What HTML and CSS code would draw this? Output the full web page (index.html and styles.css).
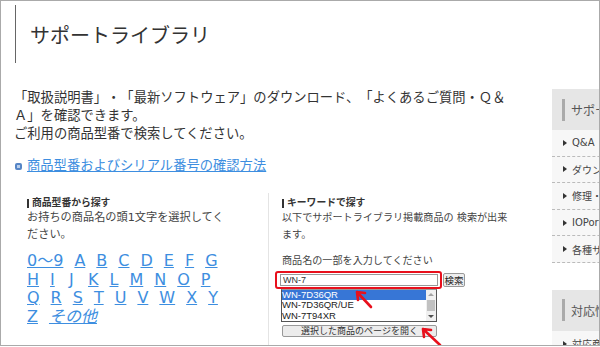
FILE: index.html
```html
<!DOCTYPE html>
<html lang="ja">
<head>
  <meta charset="UTF-8">
  <meta name="viewport" content="width=device-width, initial-scale=1.0">
  <title>サポートライブラリ</title>
  <link rel="stylesheet" href="styles.css">
</head>
<body>
<div class="frame">
  <h1 class="page-title">サポートライブラリ</h1>

  <div class="content">
    <div class="main">
      <p class="intro">「取扱説明書」・「最新ソフトウェア」のダウンロード、「よくあるご質問・Ｑ＆Ａ」を確認できます。<br>ご利用の商品型番で検索してください。</p>

      <p class="guide"><span class="guide-icon"></span><a href="#">商品型番およびシリアル番号の確認方法</a></p>

      <div class="search-cols">
        <!-- search by first letter -->
        <section class="col col-model">
          <h2 class="col-title">商品型番から探す</h2>
          <p class="col-text">お持ちの商品名の頭1文字を選択してください。</p>
          <div class="alpha">
            <div class="alpha-row">
              <a href="#">0～9</a><a href="#">A</a><a href="#">B</a><a href="#">C</a><a href="#">D</a><a href="#">E</a><a href="#">F</a><a href="#">G</a>
            </div>
            <div class="alpha-row">
              <a href="#">H</a><a href="#">I</a><a href="#">J</a><a href="#">K</a><a href="#">L</a><a href="#">M</a><a href="#">N</a><a href="#">O</a><a href="#">P</a>
            </div>
            <div class="alpha-row">
              <a href="#">Q</a><a href="#">R</a><a href="#">S</a><a href="#">T</a><a href="#">U</a><a href="#">V</a><a href="#">W</a><a href="#">X</a><a href="#">Y</a>
            </div>
            <div class="alpha-row">
              <a href="#">Z</a><a href="#" class="alpha-other">その他</a>
            </div>
          </div>
        </section>

        <!-- search by keyword -->
        <section class="col col-keyword">
          <h2 class="col-title">キーワードで探す</h2>
          <p class="col-text">以下でサポートライブラリ掲載商品の 検索が出来ます。</p>
          <p class="col-label">商品名の一部を入力してください</p>

          <div class="kw-form">
            <div class="kw-row">
              <input type="text" class="kw-input" value="WN-7">
              <button class="kw-search">検索</button>
            </div>
            <div class="kw-list">
              <ul class="kw-items">
                <li class="selected">WN-7D36QR</li>
                <li>WN-7D36QR/UE</li>
                <li>WN-7T94XR</li>
              </ul>
              <div class="kw-scroll">
                <span class="kw-up"></span>
                <span class="kw-thumb"></span>
                <span class="kw-down"></span>
              </div>
            </div>
            <button class="kw-open">選択した商品のページを開く</button>

            <span class="mark-box"></span>
            <svg class="mark-arrows" width="170" height="80" viewBox="0 0 170 80">
              <path d="M91 34 L77 19 M85 20 L77 19 L78 27" />
              <path d="M160 72 L143 56 M151 57 L143 56 L144 64" />
            </svg>
          </div>
        </section>
      </div>
    </div>

    <aside class="side">
      <div class="side-block">
        <div class="side-head">サポート情報</div>
        <ul class="side-list">
          <li>Q&amp;A</li>
          <li>ダウンロード</li>
          <li>修理・お問い合わせ</li>
          <li>IOPortal</li>
          <li>各種サービス</li>
        </ul>
      </div>
      <div class="side-block">
        <div class="side-head">対応情報</div>
        <ul class="side-list">
          <li>対応商品検索</li>
        </ul>
      </div>
    </aside>
  </div>
</div>
</body>
</html>
```

FILE: styles.css
```css
* {
  box-sizing: border-box;
}

body {
  margin: 0;
  background: #fff;
  color: #333;
  font-family: "DejaVu Sans", "Noto Sans CJK JP", sans-serif;
  text-spacing-trim: space-all;
}

/* outer window frame */
.frame {
  width: 600px;
  height: 346px;
  border: 1px solid #aaa;
  overflow: hidden;
}

.page-title {
  display: flex;
  align-items: center;
  height: 58px;
  margin: 4px 0 0 14px;
  padding-left: 14px;
  border-left: 1px solid #666;
  font-size: 20px;
  font-weight: normal;
  color: #333;
}

.content {
  display: flex;
  align-items: flex-start;
  margin-top: 26px;
}

.main {
  flex-shrink: 0;
  width: 500px;
  margin-left: 13px;
}

.intro {
  margin: 0;
  font-size: 13.3px;
  line-height: 18px;
}

.guide {
  display: flex;
  align-items: center;
  margin: 14px 0 0;
  font-size: 13.3px;
  line-height: 18px;
}

.guide a {
  color: #3d8ee0;
}

.guide-icon {
  width: 7px;
  height: 7px;
  margin: 0 5px 0 1px;
  border: 2px solid #5685c6;
  border-radius: 2px;
  background: #b9cfec;
}

/* two search columns */
.search-cols {
  display: grid;
  grid-template-columns: 254px 246px;
  margin-top: 18px;
}

.col {
  padding-top: 3px;
  padding-bottom: 20px;
}

.col-model {
  padding-left: 13px;
}

.col-keyword {
  padding-left: 13px;
  border-left: 1px solid #e4e4e4;
}

.col-title {
  display: flex;
  align-items: center;
  margin: 0;
  font-size: 9.8px;
  font-weight: bold;
  line-height: 14px;
  color: #333;
}

.col-title::before {
  content: "";
  width: 2px;
  height: 9px;
  margin-right: 3px;
  background: #333;
}

.col-text {
  margin: 0;
  line-height: 16.5px;
  color: #444;
}

.col-model .col-text {
  width: 200px;
  font-size: 11.2px;
}

.col-keyword .col-text {
  font-size: 10.1px;
}

.col-label {
  margin: 9.5px 0 0;
  font-size: 10.1px;
  line-height: 16.5px;
  color: #444;
}

/* letter index */
.alpha {
  margin-top: 9px;
}

.alpha-row {
  display: flex;
  column-gap: 11px;
  font-size: 16px;
  line-height: 18.7px;
}

.alpha-row a {
  min-width: 8px;
  color: #3d8ee0;
}

.alpha-row .alpha-other {
  font-style: italic;
}

/* keyword form */
.kw-form {
  position: relative;
  margin: 4px 0 0 -2px;
}

.kw-row {
  display: flex;
  align-items: center;
  height: 14px;
}

.kw-input {
  width: 158px;
  height: 12px;
  padding: 0 2px;
  border: 1px solid #999;
  font-family: "Liberation Sans", sans-serif;
  font-size: 9px;
  color: #333;
  outline: none;
}

.kw-search {
  width: 22px;
  height: 14px;
  margin-left: 5px;
  padding: 0;
  border: 1px solid #999;
  border-radius: 2px;
  background: #eee;
  font-family: "Noto Sans CJK JP", sans-serif;
  font-size: 9.5px;
  line-height: 12px;
  color: #222;
}

.kw-list {
  display: flex;
  width: 156px;
  height: 33px;
  margin: 2px 0 0 1px;
  border: 1px solid #555;
  border-top-color: #999;
  background: #fff;
  font-family: "Liberation Sans", sans-serif;
  font-size: 9.5px;
  color: #222;
}

.kw-items {
  flex: 1;
  margin: 0;
  padding: 0;
  list-style: none;
}

.kw-items li {
  height: 10.3px;
  line-height: 10.3px;
  white-space: nowrap;
}

.kw-items .selected {
  background: #3776d6;
  color: #fff;
}

.kw-scroll {
  display: flex;
  flex-direction: column;
  align-items: center;
  width: 10px;
  background: #f0f0f0;
}

.kw-up,
.kw-down {
  width: 0;
  height: 0;
  margin-top: 3px;
  border-left: 3px solid transparent;
  border-right: 3px solid transparent;
}

.kw-up {
  border-bottom: 3px solid #a3a3a3;
}

.kw-down {
  margin-top: auto;
  margin-bottom: 3px;
  border-top: 3px solid #505050;
}

.kw-thumb {
  width: 8px;
  height: 11px;
  margin-top: 4px;
  background: #c1c1c1;
}

.kw-open {
  display: block;
  width: 155px;
  height: 12px;
  margin: 3px 0 0 2px;
  padding: 0;
  border: 1px solid #999;
  border-radius: 2px;
  background: #ececec;
  font-family: "Noto Sans CJK JP", sans-serif;
  font-size: 9px;
  line-height: 10px;
  color: #333;
}

/* red annotation marks over the form */
.mark-box {
  position: absolute;
  left: -5px;
  top: -2px;
  width: 167px;
  height: 18px;
  border: 2px solid #e8101c;
  border-radius: 3px;
  pointer-events: none;
}

.mark-arrows {
  position: absolute;
  left: 0;
  top: 0;
  overflow: visible;
  pointer-events: none;
  fill: none;
  stroke: #e8101c;
  stroke-width: 2.6;
  stroke-linecap: round;
  stroke-linejoin: round;
}

/* right sidebar, cut by the window edge */
.side {
  flex-shrink: 0;
  width: 200px;
  margin-left: 38px;
}

.side-block + .side-block {
  margin-top: 27px;
}

.side-head {
  display: flex;
  align-items: center;
  height: 41px;
  padding-left: 10px;
  background: #e6e6e6;
  font-family: "Noto Sans CJK JP", sans-serif;
  font-size: 12px;
  color: #555;
  white-space: nowrap;
}

.side-head::before {
  content: "";
  width: 3px;
  height: 22px;
  margin-right: 6px;
  background: #aaa;
}

.side-list {
  margin: 0;
  padding: 0;
  list-style: none;
}

.side-list li {
  display: flex;
  align-items: center;
  height: 26.6px;
  padding-left: 11px;
  border-bottom: 1px dashed #bbb;
  background: #f7f7f7;
  font-size: 10px;
  color: #444;
  white-space: nowrap;
}

.side-list li::before {
  content: "";
  width: 0;
  height: 0;
  margin-right: 5px;
  border-left: 4px solid #333;
  border-top: 3.5px solid transparent;
  border-bottom: 3.5px solid transparent;
}
```
